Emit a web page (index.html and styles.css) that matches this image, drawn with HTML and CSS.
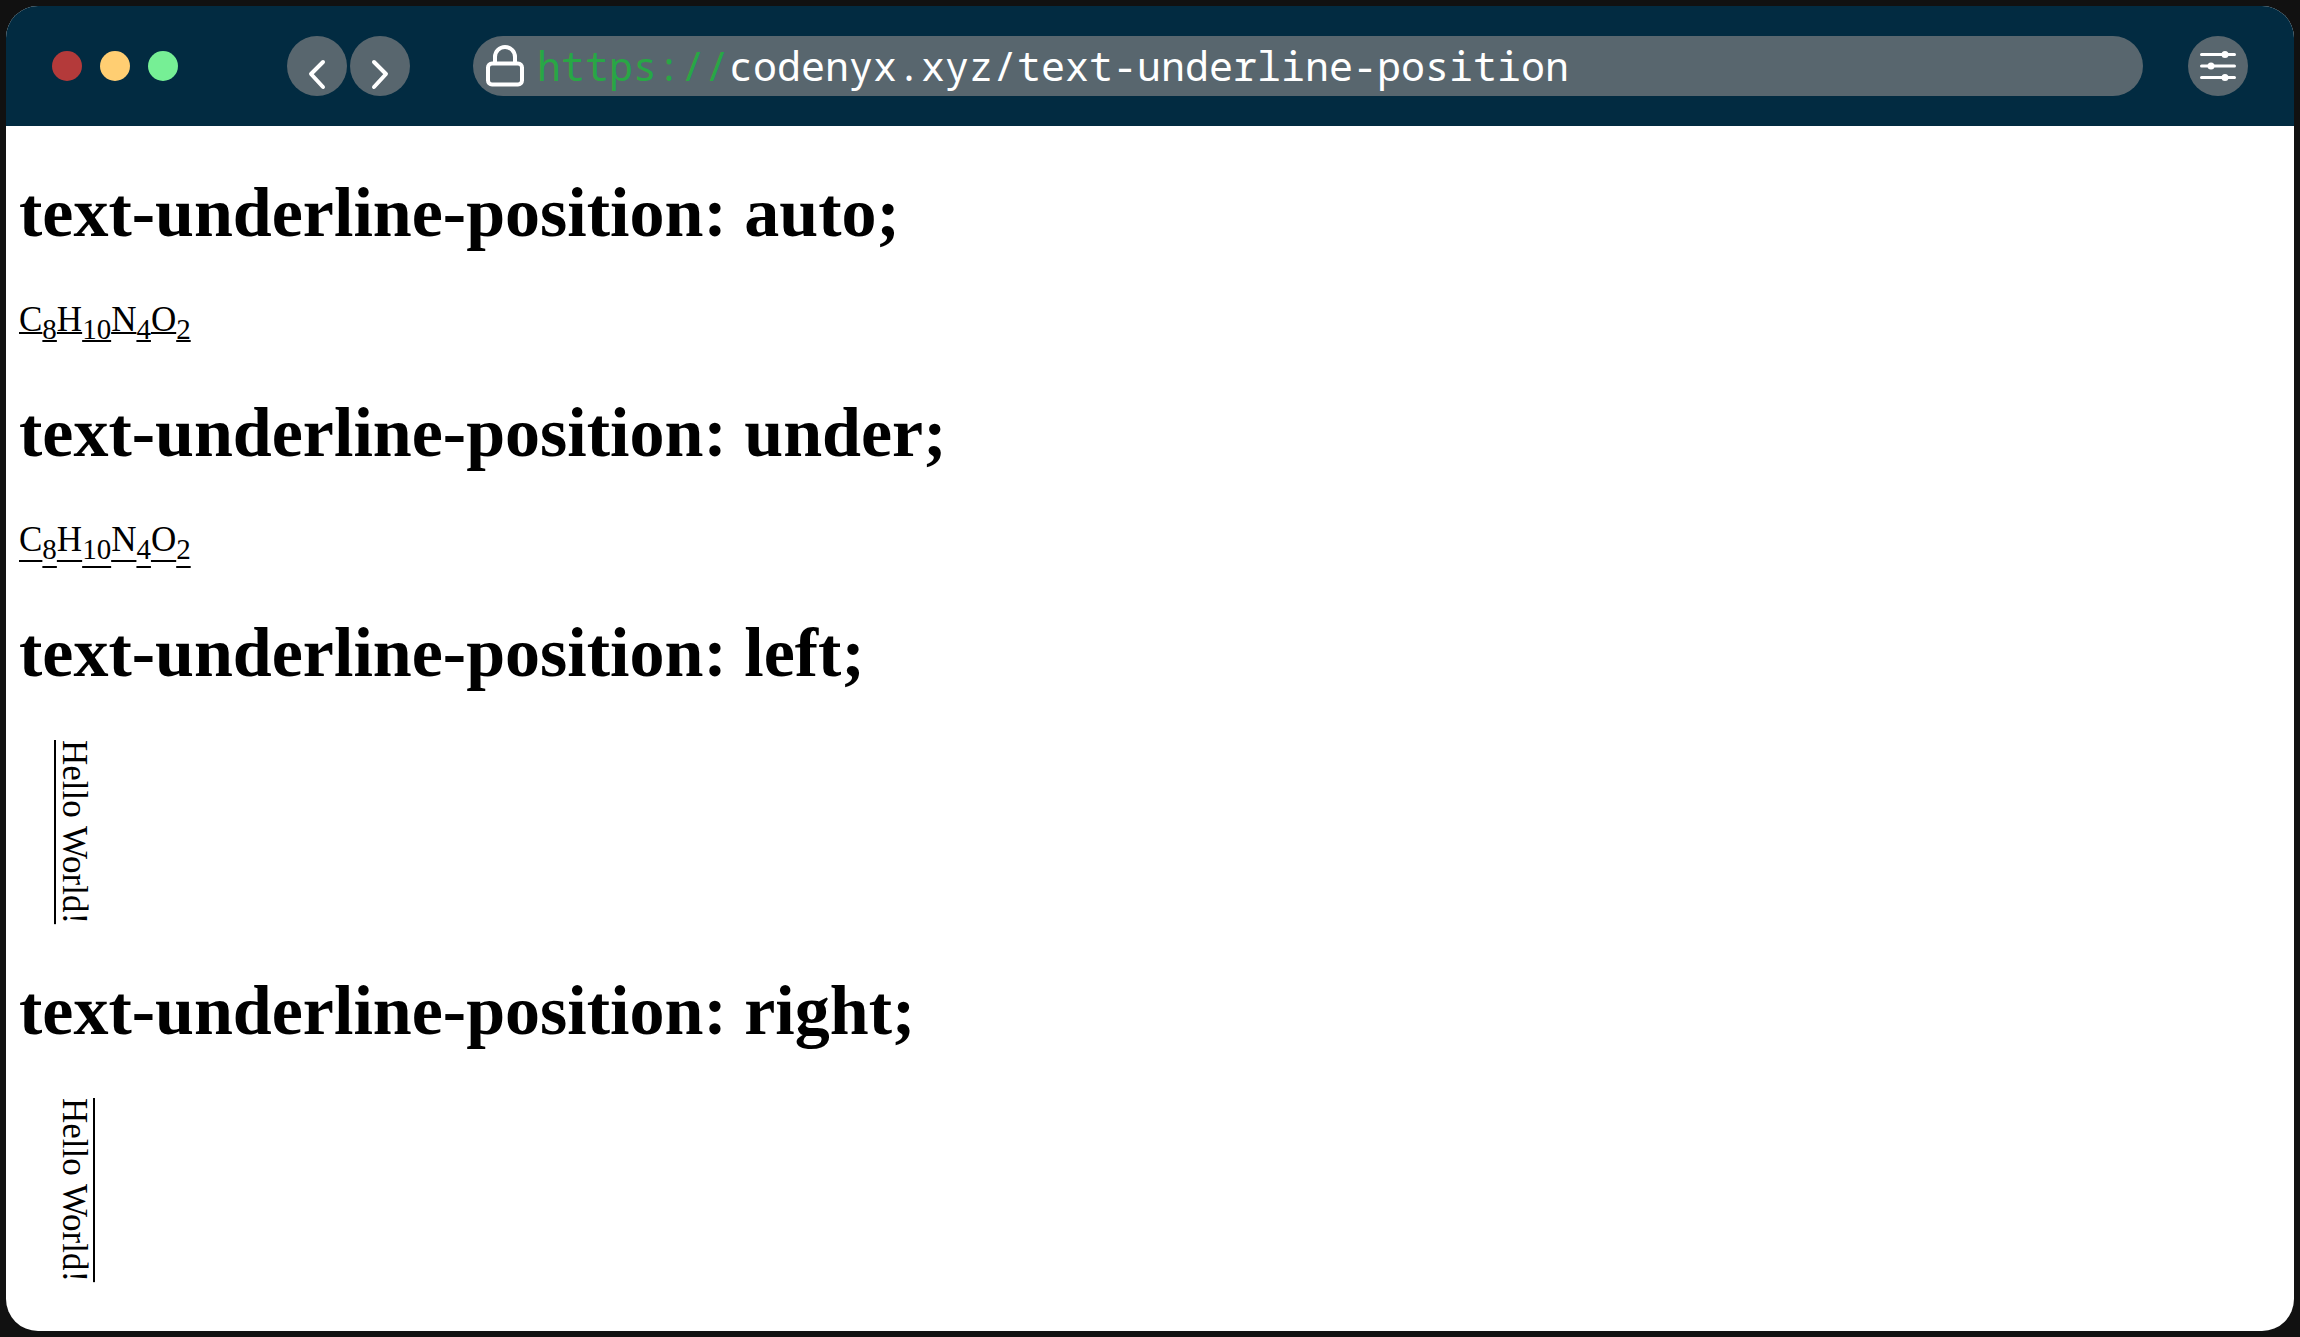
FILE: index.html
```html
<!DOCTYPE html>
<html lang="en">
<head>
<meta charset="utf-8">
<title>text-underline-position</title>
<link rel="stylesheet" href="styles.css">
</head>
<body>
<div class="window">
  <header class="toolbar">
    <div class="lights">
      <span class="light light-close"></span>
      <span class="light light-minimize"></span>
      <span class="light light-zoom"></span>
    </div>
    <nav class="history">
      <button class="round-button" type="button" aria-label="Back">
        <svg viewBox="0 0 60 60"><path d="M36 26 24 38 36 51" stroke-width="4"/></svg>
      </button>
      <button class="round-button" type="button" aria-label="Forward">
        <svg viewBox="0 0 60 60"><path d="M24 26 36 38 24 51" stroke-width="4"/></svg>
      </button>
    </nav>
    <div class="address">
      <svg class="lock" viewBox="0 0 38 42"><rect x="2" y="18.500" width="34" height="21" rx="4" stroke-width="4"/><path d="M9 18V12a10 10 0 0 1 20 0V18" stroke-width="4"/></svg>
      <label class="scheme" for="url">https://</label>
      <input class="url" id="url" type="text" value="codenyx.xyz/text-underline-position" spellcheck="false">
    </div>
    <button class="round-button" type="button" aria-label="Settings">
      <svg viewBox="0 0 60 60"><path d="M13.500 18.500H46.500M13.500 30H46.500M13.500 41.500H46.500" stroke-width="3"/><g class="knobs"><circle cx="37" cy="18.500" r="3.500"/><circle cx="23" cy="30" r="3.500"/><circle cx="37" cy="41.500" r="3.500"/></g></svg>
    </button>
  </header>
  <main class="page">
    <h1>text-underline-position: auto;</h1>
    <p class="sample auto">C<sub>8</sub>H<sub>10</sub>N<sub>4</sub>O<sub>2</sub></p>
    <h1>text-underline-position: under;</h1>
    <p class="sample under">C<sub>8</sub>H<sub>10</sub>N<sub>4</sub>O<sub>2</sub></p>
    <h1>text-underline-position: left;</h1>
    <p class="sample vertical left">Hello World!</p>
    <h1>text-underline-position: right;</h1>
    <p class="sample vertical right">Hello World!</p>
  </main>
</div>
</body>
</html>
```
FILE: styles.css
```css
* {
  box-sizing: border-box;
}

body {
  margin: 0;
  padding: 6px;
  background: #111;
}

.window {
  min-height: calc(100vh - 12px);
  border-radius: 32px;
  background: #fff;
  overflow: hidden;
}

.toolbar {
  display: flex;
  align-items: center;
  height: 120px;
  padding: 0 46px;
  background: #022b41;
}

.lights {
  display: flex;
  gap: 18px;
  margin-right: 109px;
}

.light {
  width: 30px;
  height: 30px;
  border-radius: 50%;
}

.light-close {
  background: #b43a3a;
}

.light-minimize {
  background: #ffce72;
}

.light-zoom {
  background: #76ef95;
}

.history {
  display: flex;
  gap: 3px;
}

.round-button {
  flex: none;
  width: 60px;
  height: 60px;
  padding: 0;
  border: 0;
  border-radius: 50%;
  background: #58666e;
}

svg {
  display: block;
  fill: none;
  stroke: #fff;
  stroke-linecap: round;
  stroke-linejoin: round;
}

.knobs {
  fill: #fff;
  stroke: none;
}

.address {
  display: flex;
  flex: 1;
  align-items: center;
  min-width: 0;
  height: 60px;
  margin: 0 45px 0 63px;
  padding: 0 28px 0 13px;
  border-radius: 30px;
  background: #58666e;
  font: 40px/60px "Noto Sans Mono", "DejaVu Sans Mono", monospace;
}

.lock {
  flex: none;
  width: 38px;
  height: 42px;
  margin-right: 13px;
}

.scheme {
  color: #28a745;
}

.url {
  flex: 1;
  min-width: 0;
  height: 60px;
  padding: 0;
  border: 0;
  outline: 0;
  background: none;
  color: #fff;
  font: inherit;
}

.page {
  padding: 0 13px;
  color: #000;
  font-family: "Liberation Serif", "Times New Roman", serif;
}

h1 {
  margin: 47px 0;
  font-size: 70px;
  line-height: 80px;
}

.sample {
  margin-block: 35px;
  margin-inline: 0;
  font-size: 35px;
}

.sample,
.sample sub {
  text-decoration: underline 2px;
  text-decoration-skip-ink: none;
}

/* Each subscript carries an underline at its own baseline. */
.sample sub {
  display: inline-block;
  font-size: 29px;
}

.under {
  text-underline-position: under;
}

.vertical {
  writing-mode: vertical-rl;
}

.left {
  text-underline-position: left;
}

.right {
  text-underline-position: right;
}
```
